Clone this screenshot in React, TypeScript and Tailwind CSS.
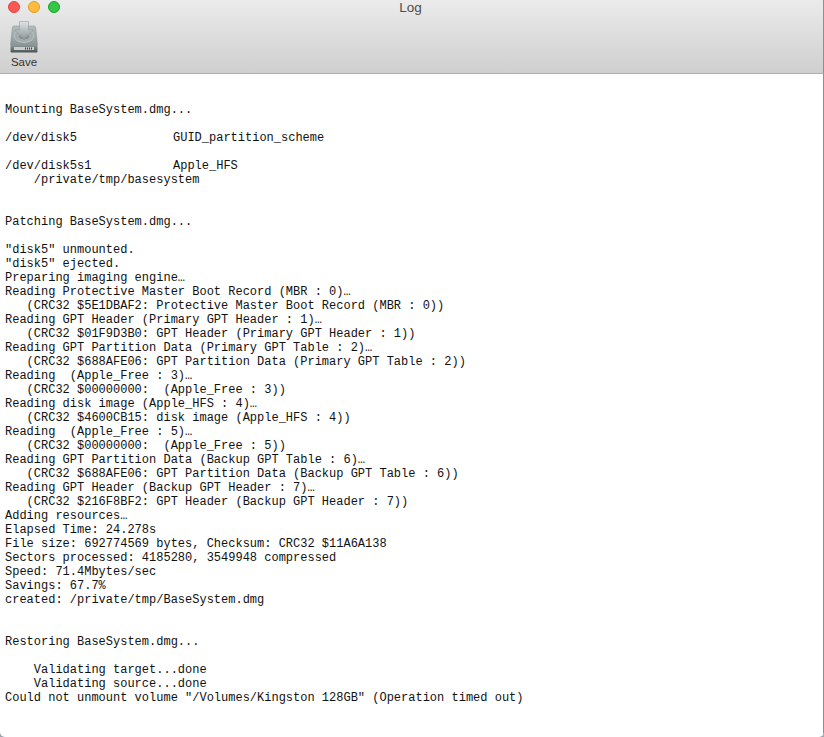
const before = `Mounting BaseSystem.dmg...
`;
const after = `
    /private/tmp/basesystem


Patching BaseSystem.dmg...

"disk5" unmounted.
"disk5" ejected.
Preparing imaging engine…
Reading Protective Master Boot Record (MBR : 0)…
   (CRC32 $5E1DBAF2: Protective Master Boot Record (MBR : 0))
Reading GPT Header (Primary GPT Header : 1)…
   (CRC32 $01F9D3B0: GPT Header (Primary GPT Header : 1))
Reading GPT Partition Data (Primary GPT Table : 2)…
   (CRC32 $688AFE06: GPT Partition Data (Primary GPT Table : 2))
Reading  (Apple_Free : 3)…
   (CRC32 $00000000:  (Apple_Free : 3))
Reading disk image (Apple_HFS : 4)…
   (CRC32 $4600CB15: disk image (Apple_HFS : 4))
Reading  (Apple_Free : 5)…
   (CRC32 $00000000:  (Apple_Free : 5))
Reading GPT Partition Data (Backup GPT Table : 6)…
   (CRC32 $688AFE06: GPT Partition Data (Backup GPT Table : 6))
Reading GPT Header (Backup GPT Header : 7)…
   (CRC32 $216F8BF2: GPT Header (Backup GPT Header : 7))
Adding resources…
Elapsed Time: 24.278s
File size: 692774569 bytes, Checksum: CRC32 $11A6A138
Sectors processed: 4185280, 3549948 compressed
Speed: 71.4Mbytes/sec
Savings: 67.7%
created: /private/tmp/BaseSystem.dmg


Restoring BaseSystem.dmg...

    Validating target...done
    Validating source...done
Could not unmount volume "/Volumes/Kingston 128GB" (Operation timed out)`;

function SaveIcon() {
  return (
    <svg width="28" height="32" viewBox="0 0 28 32" className="block">
      <defs>
        <linearGradient id="body" x1="0" y1="0" x2="0" y2="1">
          <stop offset="0" stopColor="#b4bdbd" />
          <stop offset="1" stopColor="#8b9697" />
        </linearGradient>
        <linearGradient id="arrow" x1="0" y1="0" x2="0" y2="1">
          <stop offset="0" stopColor="#dfe3e3" />
          <stop offset="1" stopColor="#8a9495" />
        </linearGradient>
        <linearGradient id="base" x1="0" y1="0" x2="0" y2="1">
          <stop offset="0" stopColor="#8f9999" />
          <stop offset="1" stopColor="#4b5253" />
        </linearGradient>
      </defs>
      <path d="M4 5 H24 Q25.5 5 25.7 7 L27.5 24 H0.5 L2.3 7 Q2.5 5 4 5 Z" fill="url(#body)" stroke="#8d9798" strokeWidth="0.6" />
      <ellipse cx="14" cy="15" rx="10" ry="6.5" fill="#a3adad" stroke="#c9cfcf" strokeWidth="0.7" />
      <ellipse cx="14" cy="15.5" rx="5" ry="2.8" fill="#808b8c" />
      <path d="M9.5 0.5 H18.5 V9 H23 L14 19 L5 9 H9.5 Z" fill="url(#arrow)" stroke="#8b9495" strokeWidth="0.5" />
      <rect x="0.5" y="24" width="27" height="7.5" rx="1" fill="url(#base)" />
      <rect x="4" y="26" width="20" height="3" fill="#c9cdcc" />
      <rect x="15" y="26.5" width="1" height="2" fill="#3a4041" />
      <rect x="17" y="26.5" width="1" height="2" fill="#3a4041" />
      <rect x="19" y="26.5" width="1" height="2" fill="#3a4041" />
      <rect x="21" y="26.5" width="1" height="2" fill="#3a4041" />
    </svg>
  );
}

export default function App() {
  return (
    <div className="h-[737px] w-[824px] bg-[#9aa7b0]">
      <div className="flex h-full w-full flex-col overflow-hidden rounded-b-[5px] bg-white font-['Liberation_Sans',sans-serif]">
        <header className="h-[74px] shrink-0 border-b border-r border-b-[#aeaeae] border-r-[#8f8f8f] bg-gradient-to-b from-[#ebebeb] to-[#cfcfcf]">
          <div className="relative flex h-[15px] items-center justify-center pr-[2px]">
            <div className="absolute left-[8px] top-[1px] flex gap-[8px]">
              <span className="h-[12px] w-[12px] rounded-full border border-[#e2463f] bg-[#fc5753]" />
              <span className="h-[12px] w-[12px] rounded-full border border-[#e09e1a] bg-[#fdbc40]" />
              <span className="h-[12px] w-[12px] rounded-full border border-[#17a42b] bg-[#33c748]" />
            </div>
            <span className="text-[13.5px] leading-[15px] text-[#4d4d4d]">Log</span>
          </div>
          <div className="ml-[4px] mt-[6px] flex w-[40px] flex-col items-center">
            <SaveIcon />
            <span className="mt-[3px] text-[11.5px] leading-[13px] text-[#333]">Save</span>
          </div>
        </header>
        <main className="flex-1 border-r border-[#8f8f8f] pl-[5px] pt-[29px]">
          <pre className="font-['Liberation_Mono',monospace] text-[12px] leading-[14px] text-[#111]">
            {before}
            {"\n"}
            <span className="inline-block w-[168px]">/dev/disk5</span>GUID_partition_scheme{"\n\n"}
            <span className="inline-block w-[168px]">/dev/disk5s1</span>Apple_HFS
            {after}
          </pre>
        </main>
      </div>
    </div>
  );
}
